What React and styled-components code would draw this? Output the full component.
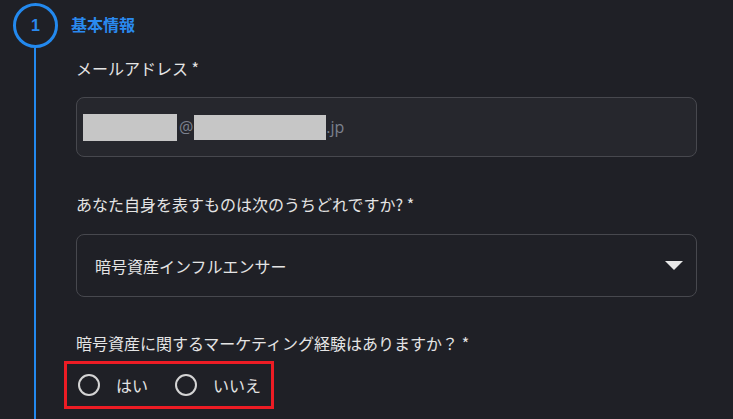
import React from "react";
import styled, { createGlobalStyle } from "styled-components";

const Global = createGlobalStyle`
  html, body { margin: 0; padding: 0; background: #1f2026; }
  body { font-family: "Noto Sans CJK JP", "Noto Sans", sans-serif; color: #e4e4e4; }
`;

const Page = styled.div`
  width: 733px;
  height: 419px;
  overflow: hidden;
  padding: 3px 0 0 13px;
  box-sizing: border-box;
  background: #1f2026;
`;

const StepHeader = styled.div`
  display: flex;
  align-items: center;
  gap: 13px;
  height: 45px;
`;

const StepCircle = styled.div`
  width: 45px;
  height: 45px;
  box-sizing: border-box;
  border: 3px solid #2389ee;
  border-radius: 50%;
  display: flex;
  align-items: center;
  justify-content: center;
  color: #2a8af0;
  font: 700 16px "Liberation Sans", "Noto Sans", sans-serif;
`;

const StepTitle = styled.div`
  color: #2a8af0;
  font-weight: 700;
  font-size: 16px;
  line-height: 20px;
  margin-top: -4px;
`;

const StepBody = styled.div`
  margin-left: 21px;
  border-left: 2px solid #2389ee;
  padding: 8px 0 20px 40px;
  display: flex;
  flex-direction: column;
  width: 621px;
`;

const Label = styled.div`
  font-size: 16px;
  line-height: 24px;
  color: #e4e4e4;
  margin-top: ${(p) => p.$gap || 0}px;
`;

const Field = styled.div`
  box-sizing: border-box;
  height: ${(p) => p.$h}px;
  margin-top: ${(p) => p.$gap}px;
  border: 1px solid #47484e;
  border-radius: 8px;
  background: ${(p) => p.$bg};
  display: flex;
  align-items: center;
  padding: 0 13px 0 ${(p) => p.$pl}px;
`;

const EmailText = styled.span`
  font: 16px "Open Sans", "Liberation Sans", sans-serif;
  color: #7c818d;
  display: flex;
  align-items: center;
`;

const Redact = styled.span`
  display: inline-block;
  width: ${(p) => p.$w}px;
  height: ${(p) => p.$h}px;
  background: #c6c6c6;
  margin: 0 ${(p) => p.$mr || 0}px 0 ${(p) => p.$ml || 0}px;
`;

const SelectValue = styled.span`
  flex: 1;
  font-size: 16px;
  color: #e4e4e4;
`;

const Caret = styled.span`
  width: 0;
  height: 0;
  border-left: 9px solid transparent;
  border-right: 9px solid transparent;
  border-top: 9px solid #e8e8e8;
`;

const RadioGroup = styled.div`
  align-self: flex-start;
  margin: 6px 0 0 -12px;
  box-sizing: border-box;
  height: 48px;
  border: 3px solid #ec1c24;
  padding: 0 10px 0 11px;
  display: flex;
  align-items: center;
  gap: 27px;
`;

const RadioOption = styled.label`
  display: flex;
  align-items: center;
  gap: 16px;
  font-size: 16px;
  color: #e4e4e4;
`;

const RadioDot = styled.span`
  width: 22px;
  height: 22px;
  box-sizing: border-box;
  border: 2px solid #d4d4d4;
  border-radius: 50%;
`;

export default function App() {
  return (
    <>
      <Global />
      <Page>
        <StepHeader>
          <StepCircle>1</StepCircle>
          <StepTitle>基本情報</StepTitle>
        </StepHeader>
        <StepBody>
          <Label>メールアドレス *</Label>
          <Field $h={60} $gap={17} $bg="#26272d" $pl={6}>
            <EmailText>
              <Redact $w={94} $h={27} />
              <span style={{ marginLeft: 2 }}>@</span>
              <Redact $w={132} $h={25} $ml={1} />
              .jp
            </EmailText>
          </Field>
          <Label $gap={35}>あなた自身を表すものは次のうちどれですか? *</Label>
          <Field $h={63} $gap={18} $bg="#1f2026" $pl={18}>
            <SelectValue>暗号資産インフルエンサー</SelectValue>
            <Caret />
          </Field>
          <Label $gap={34}>暗号資産に関するマーケティング経験はありますか？ *</Label>
          <RadioGroup>
            <RadioOption>
              <RadioDot />
              はい
            </RadioOption>
            <RadioOption>
              <RadioDot />
              いいえ
            </RadioOption>
          </RadioGroup>
        </StepBody>
      </Page>
    </>
  );
}
